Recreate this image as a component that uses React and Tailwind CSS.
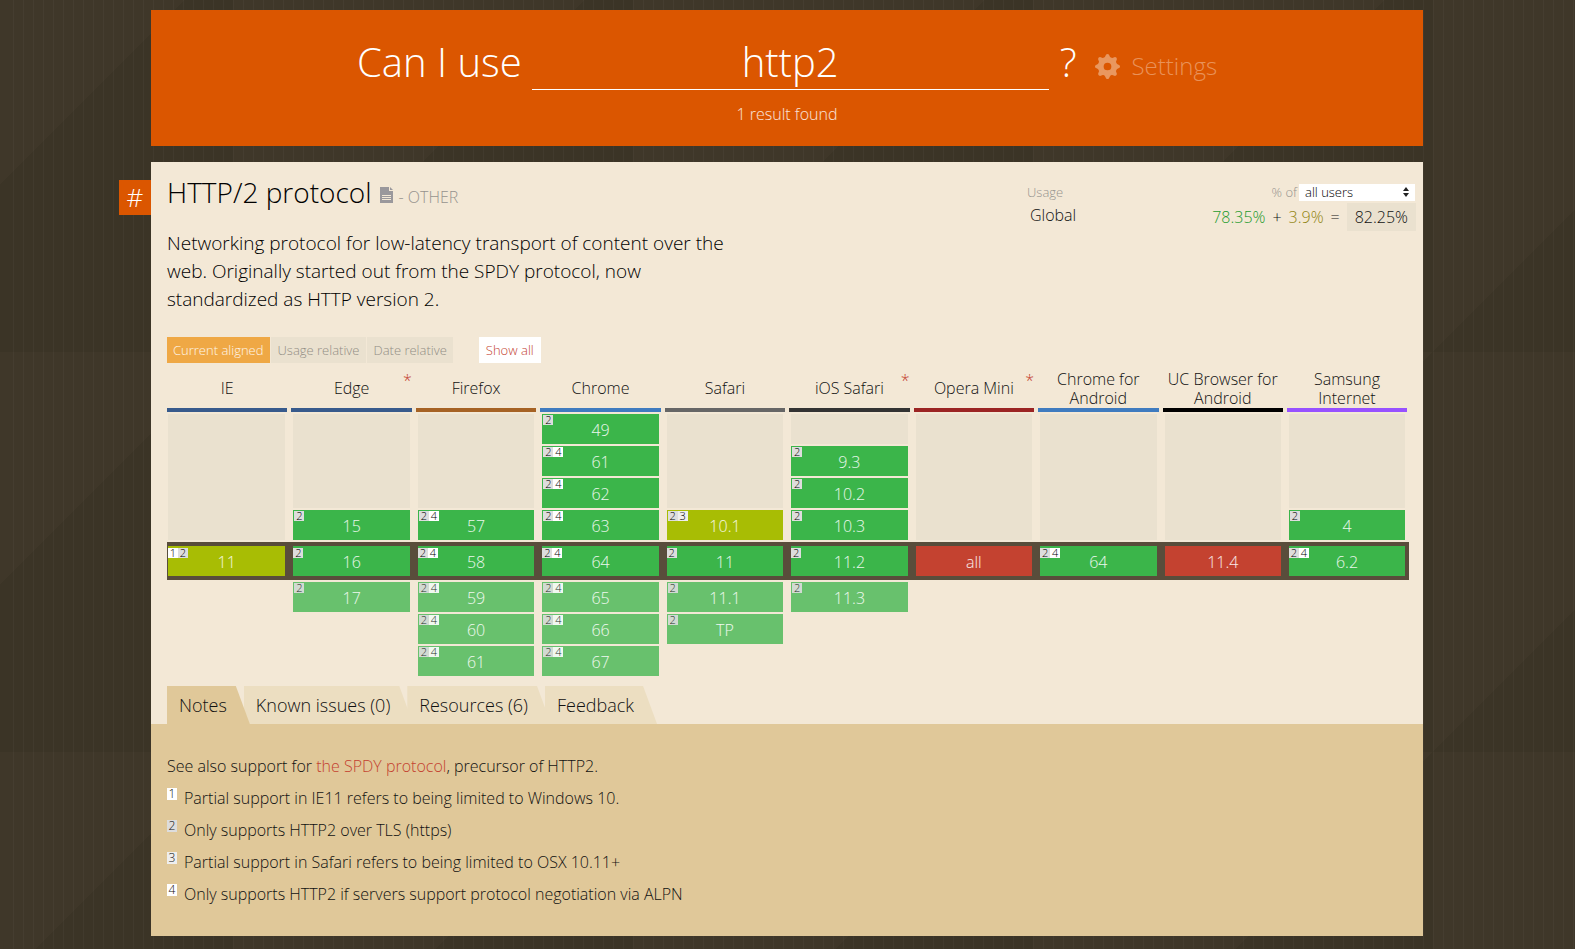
const FONT = "font-['Open_Sans',sans-serif]";

const G = "bg-[#3bb54a]";
const F = "bg-[#68c16d]";
const P = "bg-[#a8bd04]";
const R = "bg-[#c44230]";

const browsers = [
  { name: "IE", bar: "border-[#375a8c]", past: [], now: ["11", "12", P], next: [] },
  { name: "Edge", star: true, bar: "border-[#375a8c]", past: [["15", "2", G]], now: ["16", "2", G], next: [["17", "2"]] },
  { name: "Firefox", bar: "border-[#a66224]", past: [["57", "24", G]], now: ["58", "24", G], next: [["59", "24"], ["60", "24"], ["61", "24"]] },
  { name: "Chrome", bar: "border-[#3f7bbf]", past: [["49", "2", G], ["61", "24", G], ["62", "24", G], ["63", "24", G]], now: ["64", "24", G], next: [["65", "24"], ["66", "24"], ["67", "24"]] },
  { name: "Safari", bar: "border-[#666666]", past: [["10.1", "23", P]], now: ["11", "2", G], next: [["11.1", "2"], ["TP", "2"]] },
  { name: "iOS Safari", star: true, bar: "border-[#333333]", past: [["9.3", "2", G], ["10.2", "2", G], ["10.3", "2", G]], now: ["11.2", "2", G], next: [["11.3", "2"]] },
  { name: "Opera Mini", star: true, bar: "border-[#9b2423]", past: [], now: ["all", "", R], next: [] },
  { name: "Chrome for Android", bar: "border-[#3f7bbf]", past: [], now: ["64", "24", G], next: [] },
  { name: "UC Browser for Android", bar: "border-black", past: [], now: ["11.4", "", R], next: [] },
  { name: "Samsung Internet", bar: "border-[#9751ff]", past: [["4", "2", G]], now: ["6.2", "24", G], next: [] },
];

const noteBg = { 1: "bg-white", 2: "bg-[#dddddd]", 3: "bg-[#eeeeee]", 4: "bg-white" };

const notes = [
  "Partial support in IE11 refers to being limited to Windows 10.",
  "Only supports HTTP2 over TLS (https)",
  "Partial support in Safari refers to being limited to OSX 10.11+",
  "Only supports HTTP2 if servers support protocol negotiation via ALPN",
];

function Version({ data, current = false, future = false }) {
  const [label, marks, color] = data;
  return (
    <div className={`relative h-[30px] text-center text-base leading-8 text-white/90 ${future ? F : color}`}>
      <div className={`absolute flex ${current ? "left-0 top-0.5" : "left-px top-px"}`}>
        {marks.split("").map((m) => (
          <span key={m} className={`h-[10px] w-[10px] text-center text-[11px] leading-[10px] ${future ? "text-[#222222] opacity-90" : "text-black"} ${noteBg[m]}`}>
            {m}
          </span>
        ))}
      </div>
      {label}
    </div>
  );
}

function Support() {
  return (
    <table className="w-full table-fixed border-collapse">
      <colgroup>
        {browsers.map((b) => (
          <col key={b.name} className="last:w-[122px]" />
        ))}
      </colgroup>
      <thead>
        <tr>
          {browsers.map((b) => (
            <th key={b.name} scope="col" className="group p-0 font-light">
              <div className={`relative mr-1 flex h-[46px] items-center justify-center border-b-4 pt-[3px] text-center text-base leading-[19px] text-[#111111] group-last:mr-0.5 ${b.bar}`}>
                <span className="px-1">{b.name}</span>
                {b.star && <span className="absolute right-0 top-1 text-base leading-5 text-[#c44230]">*</span>}
              </div>
            </th>
          ))}
        </tr>
      </thead>
      <tbody>
        <tr>
          {browsers.map((b) => (
            <td key={b.name} className="p-0 pl-0.5 pr-1.5 align-top first:pl-px last:pr-1">
              <div className="flex h-[130px] flex-col gap-0.5 py-0.5">
                {b.past.length < 4 && <div className="grow bg-[#eae1cf]" />}
                {b.past.map((v) => <Version key={v[0]} data={v} />)}
              </div>
            </td>
          ))}
        </tr>
        <tr className="bg-[#594d3b]">
          {browsers.map((b) => (
            <td key={b.name} className="py-1 pl-0.5 pr-1.5 first:pl-px last:pr-1">
              <Version data={b.now} current />
            </td>
          ))}
        </tr>
        <tr>
          {browsers.map((b) => (
            <td key={b.name} className="p-0 pl-0.5 pr-1.5 align-top first:pl-px last:pr-1">
              <div className="flex flex-col gap-0.5 pt-0.5">
                {b.next.map((v) => <Version key={v[0]} data={v} future />)}
              </div>
            </td>
          ))}
        </tr>
      </tbody>
    </table>
  );
}

function Tab({ children, active = false }) {
  return (
    <button
      type="button"
      role="tab"
      aria-selected={active}
      className={`h-[38px] pl-3 pr-[23px] text-lg leading-[38px] font-light text-[#111111] [clip-path:polygon(0_0,calc(100%-14px)_0,100%_100%,0_100%)] ${active ? "relative z-10 bg-[#e0c899]" : "-ml-1.5 bg-[#ecdec1]"}`}
    >
      {children}
    </button>
  );
}

const teeth = [0, 45, 90, 135, 180, 225, 270, 315];

function Gear() {
  return (
    <svg viewBox="0 0 24 24" className="h-[25px] w-[25px] text-[#e9975f]" fill="currentColor" aria-hidden="true">
      <circle cx="12" cy="12" r="6.500" fill="none" stroke="currentColor" strokeWidth="5.600" />
      {teeth.map((a) => (
        <path key={a} d="M8.800 4.200L10.700.500Q12-.500 13.300.500L15.200 4.200z" transform={`rotate(${a} 12 12)`} />
      ))}
    </svg>
  );
}

export default function App() {
  return (
    <div className={`min-h-screen bg-[#3d3427] pb-3 pl-[151px] pr-[152px] pt-[10px] font-light text-[#111111] ${FONT} [background-image:repeating-linear-gradient(to_right,transparent_0_9px,rgba(255,255,255,0.03)_9px_10px),linear-gradient(135deg,#3f3729_50%,#3b3426_50%)] [background-position:4px_0,233px_-48px] [background-size:auto,400px_400px]`}>
      <main>
        <header className="bg-[#db5600] pb-5 pt-7 text-white">
          <div className="flex items-center justify-center">
            <label htmlFor="query" className="pb-1 text-[40px] leading-[48px]">Can I use</label>
            <input id="query" defaultValue="http2" className="ml-[10px] h-[52px] w-[517px] border-b border-white bg-transparent pb-[5px] text-center text-[40px] leading-[46px] font-light outline-none" />
            <span className="ml-[11px] pb-1 text-[40px] leading-[48px]">?</span>
            <button type="button" className="ml-[19px] flex items-center gap-[11px] pt-1 text-2xl text-[#e99259]">
              <Gear />
              Settings
            </button>
          </div>
          <p className="mt-3 text-center text-base leading-6 text-white/85">1 result found</p>
        </header>

        <article className="relative mt-4 bg-[#f3e8d6]">
          <a href="#http2" aria-label="Link to this feature" className="absolute right-full top-[18px] flex h-[35px] w-8 items-center justify-center bg-[#db5600] text-[26px] text-white">#</a>
          <div className="px-4">
            <div className="flex justify-between pt-[11px]">
              <div className="w-[576px]">
                <h1 className="flex items-baseline text-[28px] leading-[38px] text-black">
                  HTTP/2 protocol
                  <a href="#spec" aria-label="Specification" className="ml-2 text-[#9a989c]">
                    <svg viewBox="0 0 13 16" className="h-4 w-[13px]" aria-hidden="true">
                      <path fill="currentColor" fillRule="evenodd" d="M0 0h9v4h4v12H0zM2 8v1h9V8zM2 10v1h9v-1zM2 12v1h9v-1z" />
                      <path fill="currentColor" d="M10 0l3 3h-3z" />
                    </svg>
                  </a>
                  <span className="ml-1.5 text-base text-[#96938e]">- OTHER</span>
                </h1>
                <p className="mt-[18px] text-[19px] leading-7 text-black">
                  Networking protocol for low-latency transport of content over the web. Originally started out from the SPDY protocol, now standardized as HTTP version 2.
                </p>
              </div>
              <div className="-mr-2 w-[388px] pt-[10px]">
                <div className="flex items-center justify-between text-[13px] leading-[18px] text-[#96938e]">
                  <span>Usage</span>
                  <span className="relative flex items-center gap-0.5">
                    <label htmlFor="users">% of</label>
                    <select id="users" className="h-[17px] w-[116px] appearance-none bg-white pl-1.5 text-[13px] leading-[17px] font-light text-black">
                      <option>all users</option>
                    </select>
                    <svg viewBox="0 0 6 10" className="pointer-events-none absolute right-1.5 top-1 h-[10px] w-1.5" fill="#222222" aria-hidden="true">
                      <path d="M3 0l3 4H0zM3 10L0 6h6z" />
                    </svg>
                  </span>
                </div>
                <div className="-mr-px mt-0.5 flex items-start text-base">
                  <span className="ml-[3px] grow leading-6">Global</span>
                  <span className="flex gap-[7px] pr-[7px] leading-7">
                    <span className="text-[#1c9a2c]">78.35%</span>
                    <span>+</span>
                    <span className="text-[#918410]">3.9%</span>
                    <span>=</span>
                  </span>
                  <span className="bg-[#eae1cf] px-2 leading-7">82.25%</span>
                </div>
              </div>
            </div>

            <div className="mt-6 flex gap-px text-[13px] leading-[26px] text-[#928e85]">
              <button type="button" className="bg-[#efa845] pl-1.5 pr-[7px] text-white/90">Current aligned</button>
              <button type="button" className="bg-[#eae1cf] pl-1.5 pr-[7px]">Usage relative</button>
              <button type="button" className="bg-[#eae1cf] px-1.5">Date relative</button>
              <button type="button" className="ml-[25px] bg-white px-[7px] text-[#c44230]">Show all</button>
            </div>

            <div className="-mr-0.5 mt-[3px]">
              <Support />
            </div>

            <div role="tablist" className="mt-[10px] flex">
              <Tab active>Notes</Tab>
              <Tab>Known issues (0)</Tab>
              <Tab>Resources (6)</Tab>
              <Tab>Feedback</Tab>
            </div>
          </div>
          <section className="bg-[#e0c899] px-4 pb-[26px] pt-[26px] text-base leading-8">
            <p>See also support for <a href="#spdy" className="text-[#c44230]">the SPDY protocol</a>, precursor of HTTP2.</p>
            <ol>
              {notes.map((n, i) => (
                <li key={n} className="flex items-start">
                  <span className={`mr-[7px] mt-1.5 h-3 w-[10px] text-center text-xs leading-3 ${noteBg[i + 1]}`}>{i + 1}</span>
                  {n}
                </li>
              ))}
            </ol>
          </section>
        </article>
      </main>
    </div>
  );
}
